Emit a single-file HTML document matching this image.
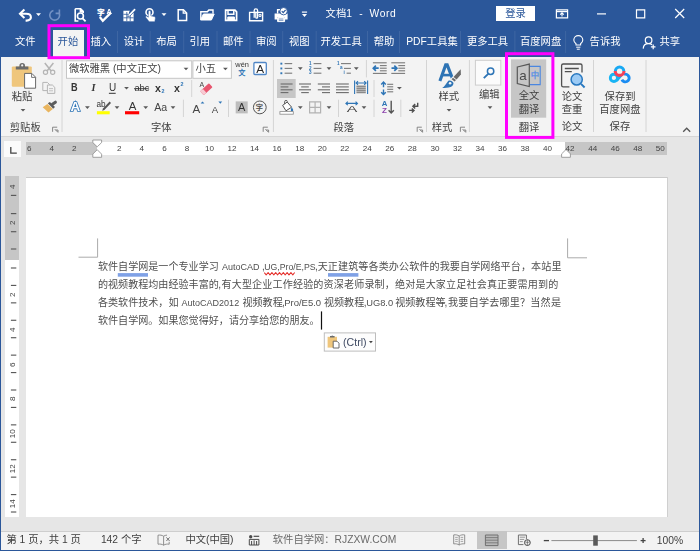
<!DOCTYPE html>
<html lang="zh-CN"><head><meta charset="utf-8"><title>文档1 - Word</title>
<style>
html,body{margin:0;padding:0}
body{width:700px;height:551px;position:relative;overflow:hidden;background:#e6e6e6;font-family:"Liberation Sans",sans-serif}
.b{position:absolute;box-sizing:border-box}
#ov{position:absolute;left:0;top:0;width:700px;height:551px}
#tx{position:absolute;left:0;top:0;width:700px;height:551px;will-change:transform}
.l{position:absolute;white-space:nowrap;font-family:"Liberation Sans",sans-serif}
.t{position:absolute;white-space:nowrap;font-family:"Liberation Sans","Noto Sans CJK SC",sans-serif}
</style></head><body>
<div class="b" style="left:0px;top:0px;width:700px;height:56.5px;background:#2b579a;"></div>
<div class="b" style="left:0px;top:56.5px;width:700px;height:79.5px;background:#f3f3f3;"></div>
<div class="b" style="left:0px;top:136px;width:700px;height:1px;background:#d6d6d6;"></div>
<div class="b" style="left:53px;top:30px;width:31px;height:26.5px;background:#f3f3f3;"></div>
<div class="b" style="left:496px;top:6px;width:39px;height:15.3px;background:#ffffff;"></div>
<div class="b" style="left:3.8px;top:140.6px;width:17.6px;height:16.3px;background:#fbfbfb;"></div>
<div class="b" style="left:25.7px;top:142px;width:71.1px;height:12.8px;background:#c6c6c6;"></div>
<div class="b" style="left:96.8px;top:142px;width:468.3px;height:12.8px;background:#ffffff;"></div>
<div class="b" style="left:565.1px;top:142px;width:102px;height:12.8px;background:#c6c6c6;"></div>
<div class="b" style="left:5.1px;top:176.2px;width:14.3px;height:83.5px;background:#c6c6c6;"></div>
<div class="b" style="left:5.1px;top:259.7px;width:14.3px;height:257.3px;background:#ffffff;"></div>
<div class="b" style="left:25.7px;top:177.5px;width:641.4px;height:339.5px;background:#ffffff;"></div>
<div class="b" style="left:25.7px;top:176.7px;width:642.2px;height:0.9px;background:#cacaca;"></div>
<div class="b" style="left:667px;top:176.7px;width:0.9px;height:340.3px;background:#cfcfcf;"></div>
<div class="b" style="left:0px;top:531.3px;width:700px;height:18.3px;background:#f3f3f3;"></div>
<div class="b" style="left:0px;top:530.7px;width:700px;height:0.9px;background:#cecece;"></div>
<div class="b" style="left:477.1px;top:531.1px;width:29.8px;height:18.4px;background:#c6c6c6;"></div>
<div class="b" style="left:0px;top:0px;width:1.2px;height:551px;background:#2b579a;"></div>
<div class="b" style="left:698.6px;top:0px;width:1.4px;height:551px;background:#2b579a;"></div>
<div class="b" style="left:0px;top:549.5px;width:700px;height:1.5px;background:#2b579a;"></div>
<svg id="ov" width="700" height="551" viewBox="0 0 700 551">
<path d="M88.75 31L88.75 53" stroke="#ffffff" stroke-width="1" fill="none" opacity="0.09"/>
<path d="M117.5 31L117.5 53" stroke="#ffffff" stroke-width="1" fill="none" opacity="0.09"/>
<path d="M150.2 31L150.2 53" stroke="#ffffff" stroke-width="1" fill="none" opacity="0.09"/>
<path d="M183.7 31L183.7 53" stroke="#ffffff" stroke-width="1" fill="none" opacity="0.09"/>
<path d="M217 31L217 53" stroke="#ffffff" stroke-width="1" fill="none" opacity="0.09"/>
<path d="M250 31L250 53" stroke="#ffffff" stroke-width="1" fill="none" opacity="0.09"/>
<path d="M282.7 31L282.7 53" stroke="#ffffff" stroke-width="1" fill="none" opacity="0.09"/>
<path d="M316.2 31L316.2 53" stroke="#ffffff" stroke-width="1" fill="none" opacity="0.09"/>
<path d="M367.5 31L367.5 53" stroke="#ffffff" stroke-width="1" fill="none" opacity="0.09"/>
<path d="M399.5 31L399.5 53" stroke="#ffffff" stroke-width="1" fill="none" opacity="0.09"/>
<path d="M460.5 31L460.5 53" stroke="#ffffff" stroke-width="1" fill="none" opacity="0.09"/>
<path d="M514.9 31L514.9 53" stroke="#ffffff" stroke-width="1" fill="none" opacity="0.09"/>
<path d="M565.6 31L565.6 53" stroke="#ffffff" stroke-width="1" fill="none" opacity="0.09"/>
<path d="M62 60L62 132" stroke="#d4d4d4" stroke-width="1" fill="none" />
<path d="M273.4 60L273.4 132" stroke="#d4d4d4" stroke-width="1" fill="none" />
<path d="M426.5 60L426.5 132" stroke="#d4d4d4" stroke-width="1" fill="none" />
<path d="M469.4 60L469.4 132" stroke="#d4d4d4" stroke-width="1" fill="none" />
<path d="M593.5 60L593.5 132" stroke="#d4d4d4" stroke-width="1" fill="none" />
<path d="M646 60L646 132" stroke="#d4d4d4" stroke-width="1" fill="none" />
<path d="M191.7 80L191.7 97" stroke="#d4d4d4" stroke-width="1" fill="none" />
<path d="M183.4 99.7L183.4 117" stroke="#d4d4d4" stroke-width="1" fill="none" />
<path d="M228.5 99.7L228.5 117" stroke="#d4d4d4" stroke-width="1" fill="none" />
<path d="M366.4 60L366.4 77.4" stroke="#d4d4d4" stroke-width="1" fill="none" />
<path d="M374 80L374 97" stroke="#d4d4d4" stroke-width="1" fill="none" />
<path d="M338.5 99.7L338.5 117" stroke="#d4d4d4" stroke-width="1" fill="none" />
<path d="M374 99.7L374 117" stroke="#d4d4d4" stroke-width="1" fill="none" />
<path d="M400.8 99.7L400.8 117" stroke="#d4d4d4" stroke-width="1" fill="none" />
<rect x="511" y="59.4" width="35.2" height="58.3" fill="#c6c6c6" />
<rect x="66.5" y="60.8" width="125.2" height="17.5" fill="#fff" stroke="#c6c6c6" stroke-width="1"/>
<rect x="192.9" y="60.8" width="38.5" height="17.5" fill="#fff" stroke="#c6c6c6" stroke-width="1"/>
<path d="M10.8 147v6.2h6" stroke="#444" stroke-width="1.3" fill="none"/>
<path d="M92.8 140h8.8v2.6l-4.4 4.2l-4.4-4.2z" fill="#fff" stroke="#8a8a8a" stroke-width="0.8"/>
<path d="M92.8 157.3v-3.2l4.4-4.4l4.4 4.4v3.2z" fill="#fff" stroke="#8a8a8a" stroke-width="0.8"/>
<path d="M561.6 157.3v-3.4l4.4-4.4l4.4 4.4v3.4z" fill="#fff" stroke="#8a8a8a" stroke-width="0.8"/>
<path d="M10.9 195.4L16.3 195.4" stroke="#5a5a5a" stroke-width="1.15" fill="none" />
<path d="M10.9 213.6L16.3 213.6" stroke="#5a5a5a" stroke-width="1.15" fill="none" />
<path d="M10.9 231.7L16.3 231.7" stroke="#5a5a5a" stroke-width="1.15" fill="none" />
<path d="M10.9 249L16.3 249" stroke="#5a5a5a" stroke-width="1.15" fill="none" />
<path d="M10.9 267.99L16.3 267.99" stroke="#5a5a5a" stroke-width="1.15" fill="none" />
<path d="M10.9 285.42L16.3 285.42" stroke="#5a5a5a" stroke-width="1.15" fill="none" />
<path d="M10.9 302.85L16.3 302.85" stroke="#5a5a5a" stroke-width="1.15" fill="none" />
<path d="M10.9 320.28L16.3 320.28" stroke="#5a5a5a" stroke-width="1.15" fill="none" />
<path d="M10.9 337.71L16.3 337.71" stroke="#5a5a5a" stroke-width="1.15" fill="none" />
<path d="M10.9 355.14L16.3 355.14" stroke="#5a5a5a" stroke-width="1.15" fill="none" />
<path d="M10.9 372.57L16.3 372.57" stroke="#5a5a5a" stroke-width="1.15" fill="none" />
<path d="M10.9 390L16.3 390" stroke="#5a5a5a" stroke-width="1.15" fill="none" />
<path d="M10.9 407.43L16.3 407.43" stroke="#5a5a5a" stroke-width="1.15" fill="none" />
<path d="M10.9 424.86L16.3 424.86" stroke="#5a5a5a" stroke-width="1.15" fill="none" />
<path d="M10.9 442.29L16.3 442.29" stroke="#5a5a5a" stroke-width="1.15" fill="none" />
<path d="M10.9 459.72L16.3 459.72" stroke="#5a5a5a" stroke-width="1.15" fill="none" />
<path d="M10.9 477.15L16.3 477.15" stroke="#5a5a5a" stroke-width="1.15" fill="none" />
<path d="M10.9 494.58L16.3 494.58" stroke="#5a5a5a" stroke-width="1.15" fill="none" />
<path d="M10.9 512.01L16.3 512.01" stroke="#5a5a5a" stroke-width="1.15" fill="none" />
<path d="M78.5 257.2H97.6V238.4" stroke="#ababab" fill="none" stroke-width="1"/>
<path d="M587 257.8H567.6V238.4" stroke="#ababab" fill="none" stroke-width="1"/>
<rect x="117.8" y="273.1" width="30.2" height="3.6" fill="#7fa1e6" />
<rect x="328" y="273.1" width="30.4" height="3.6" fill="#7fa1e6" />
<path d="M264.3 272.6L266.2 274.9L268.1 272.5L270 274.9L271.9 272.5L273.8 274.9L275.7 272.5L277.6 274.9L279.5 272.5L281.4 274.9L283.3 272.5L285.2 274.9L287.1 272.5L289 274.9L290.9 272.5L292.8 274.9L294.7 272.5" stroke="#e5332f" stroke-width="1.05" fill="none" stroke-linejoin="round"/>
<rect x="320.9" y="311.4" width="1.2" height="18.2" fill="#111" />
<rect x="324.3" y="332.9" width="51.2" height="18.2" fill="#fdfdfd" stroke="#bdbdbd" stroke-width="1"/>
<path d="M369 341h3.8l-1.9 2.2z" fill="#444"/>
<path d="M551.4 540.6L636.9 540.6" stroke="#8a8a8a" stroke-width="1" fill="none" />
<rect x="593.2" y="535.4" width="4.6" height="10.3" fill="#5a5a5a" />
<path d="M543.8 540.6L549 540.6" stroke="#444" stroke-width="1.3" fill="none" />
<path d="M640.6 540.6L645.6 540.6" stroke="#444" stroke-width="1.3" fill="none" />
<path d="M643.1 538.1L643.1 543.1" stroke="#444" stroke-width="1.3" fill="none" />
<rect x="49" y="25.7" width="39.5" height="32" fill="none" stroke="#ff00ff" stroke-width="3"/>
<rect x="506.5" y="53.7" width="46.4" height="83.7" fill="none" stroke="#ff00ff" stroke-width="3"/>
<path d="M24.4 9.6L20 13.8L24.4 18" fill="none" stroke="#ffffff" stroke-width="2.1" stroke-linejoin="miter"/>
<path d="M20.6 13.8H26.2C32.4 13.8 32.4 20.6 26.6 20.6H25.6" fill="none" stroke="#ffffff" stroke-width="2.1"/>
<path d="M36 13.2h5l-2.5 2.8z" fill="#ffffff"/>
<path d="M53.43 10.47A4.9 4.9 0 1 0 59.14 13.13" fill="none" stroke="#7391c4" stroke-width="1.6"/>
<path d="M55.6 13.4h3.8v-3.9" fill="none" stroke="#7391c4" stroke-width="1.6"/>
<path d="M75.2 8.8h5.4l2.6 2.6v1.6M75.2 8.8v12.2h3.2M80.4 9v2.8h2.8" fill="none" stroke="#ffffff" stroke-width="1.6"/>
<circle cx="80.4" cy="16" r="3" fill="none" stroke="#fff" stroke-width="1.6"/>
<path d="M82.6 18.3l3 3" fill="none" stroke="#ffffff" stroke-width="1.9"/>
<text x="97.3" y="14.77" font-size="7.2" fill="#ffffff" stroke="#ffffff" stroke-width="0.6" font-family="&quot;Liberation Sans&quot;,&quot;Noto Sans CJK SC&quot;,sans-serif">字</text>
<path d="M99.8 17l3 3.8l8.2-8.2" fill="none" stroke="#ffffff" stroke-width="2.2"/>
<path d="M123.4 10.8h6.6l-1 1.2v2.4h2.2l2.4-2.2v9h-10.2z" fill="#ffffff"/>
<path d="M126.8 12v9.2M130.2 14.6v6.6M123.4 14.3h5M123.4 17.8h10.2" fill="none" stroke="#2b579a" stroke-width="0.8"/>
<path d="M134.4 8.2l1.6 1.6l-6 6.2l-2.4 .9l.8-2.5z" fill="#ffffff" stroke="#2b579a" stroke-width="0.7"/>
<circle cx="149.5" cy="12.2" r="3.5" fill="none" stroke="#fff" stroke-width="1.6"/>
<path d="M148.3 11.8a1.25 1.25 0 0 1 2.5 0v4l3.4 .8c1 .2 1.3 .9 1.2 1.7l-.6 3.4h-5.6l-3.4-4.3c-.6-.8 .4-1.8 1.2-1.2l1.3 1z" fill="#ffffff" stroke="#2b579a" stroke-width="0.5"/>
<path d="M161.5 13.2h5l-2.5 2.8z" fill="#ffffff"/>
<path d="M178.2 9.8h5.2l3.2 3.2v7.6h-8.4z" fill="none" stroke="#ffffff" stroke-width="1.5"/>
<path d="M183.2 10v3.2h3.2" fill="none" stroke="#ffffff" stroke-width="1.2"/>
<path d="M200.8 19.8v-8h6.6l1.4-1.8h4.2v3.6" fill="none" stroke="#ffffff" stroke-width="1.4"/>
<path d="M200.6 20l2.8-6h10.8l-2.8 6z" fill="#ffffff" stroke="#ffffff" stroke-width="1"/>
<path d="M225.6 10.2h9.4l1.6 1.6v8.6h-11z" fill="none" stroke="#ffffff" stroke-width="1.7"/>
<path d="M228 10.4v3.8h5.8v-3.8" fill="none" stroke="#ffffff" stroke-width="1.5"/>
<path d="M227.8 20.4v-3.4h6.6v3.4z" fill="#ffffff" stroke="#ffffff" stroke-width="1"/>
<path d="M249.6 12.4h13v8.4h-13z" fill="none" stroke="#ffffff" stroke-width="1.4"/>
<path d="M259 14.4h2v2h-2z" fill="none" stroke="#ffffff" stroke-width="1"/>
<path d="M254.2 17.8v-7.2a1.7 1.7 0 0 1 3.4 0v6.6a.9 .9 0 0 1-1.8 0v-5.4" fill="none" stroke="#ffffff" stroke-width="1.3"/>
<path d="M277.6 13.6v-3.8h5.4" fill="none" stroke="#ffffff" stroke-width="1.4"/>
<path d="M274.6 13.6h13v6h-2.6v-2.4h-7.8v2.4h-2.6z" fill="#ffffff"/>
<path d="M277.6 17.6h7v4h-7z" fill="#ffffff" stroke="#ffffff" stroke-width="1"/>
<path d="M278.8 19h4.6M278.8 20.4h4.6" fill="none" stroke="#2b579a" stroke-width="0.6"/>
<circle cx="283.6" cy="11.2" r="3.7" fill="#fff" stroke="#2b579a" stroke-width="0.9"/>
<path d="M281.8 11.2l1.4 1.5l2.4-2.8" fill="none" stroke="#2b579a" stroke-width="1.2"/>
<path d="M301.9 12.1L307.1 12.1" stroke="#ffffff" stroke-width="1.2" fill="none" />
<path d="M302 14.1h5l-2.5 2.8z" fill="#ffffff"/>
<path d="M556.4 9.8h11.2v8h-11.2z" fill="none" stroke="#ffffff" stroke-width="1.2"/>
<path d="M556.4 11.6h11.2" fill="none" stroke="#ffffff" stroke-width="1.2"/>
<path d="M562 16.6v-3.6M560.2 14.6l1.8-1.8l1.8 1.8" fill="none" stroke="#ffffff" stroke-width="1.1"/>
<path d="M597 13.9L606 13.9" stroke="#ffffff" stroke-width="1.2" fill="none" />
<path d="M636.5 9.8h8.2v8h-8.2z" fill="none" stroke="#ffffff" stroke-width="1.2"/>
<path d="M675.2 9l9 9M684.2 9l-9 9" fill="none" stroke="#ffffff" stroke-width="1.2"/>
<path d="M576 45v-1.2c-1.6-1.3-2.2-2.4-2.2-3.7a4.5 4.5 0 0 1 9 0c0 1.3-.6 2.4-2.2 3.7V45z" fill="none" stroke="#ffffff" stroke-width="1.1"/>
<path d="M576.2 47.2h4.2M576.8 49.2h3" fill="none" stroke="#ffffff" stroke-width="1"/>
<circle cx="648.6" cy="40.2" r="3.3" fill="none" stroke="#fff" stroke-width="1.2"/>
<path d="M643.2 48.6c.2-3 2.4-4.9 5.4-4.9c1.4 0 2.6 .4 3.4 1.1" fill="none" stroke="#ffffff" stroke-width="1.2"/>
<path d="M653.2 44.6v4.6M650.9 46.9h4.6" fill="none" stroke="#ffffff" stroke-width="1.2"/>
<path d="M13 66.4h17.6a1.2 1.2 0 0 1 1.2 1.2v18a1.2 1.2 0 0 1-1.2 1.2h-17.6a1.2 1.2 0 0 1-1.2-1.2v-18a1.2 1.2 0 0 1 1.2-1.2z" fill="#efc67c"/>
<path d="M15.8 66.6h12.6v2.9h-12.6z" fill="#6b6b6b"/>
<path d="M19.4 67v-1.2a2.8 2.8 0 0 1 5.6 0v1.2z" fill="#6b6b6b"/>
<circle cx="22.2" cy="65.4" r="1.1" fill="#f3f3f3"/>
<path d="M24.6 73.4h7.2l3.8 3.8v11h-11z" fill="#fff" stroke="#686868" stroke-width="1"/>
<path d="M31.6 73.6v3.8h3.8" fill="none" stroke="#686868" stroke-width="0.9"/>
<path d="M20.6 108.9h4.8l-2.4 2.6z" fill="#5a5a5a"/>
<path d="M44.8 63l6.2 7.8M53.4 63l-6.2 7.8" fill="none" stroke="#b4b4b4" stroke-width="1.5"/>
<circle cx="45.5" cy="72.3" r="2.1" fill="none" stroke="#b4b4b4" stroke-width="1.2"/>
<circle cx="52.7" cy="72.3" r="2.1" fill="none" stroke="#b4b4b4" stroke-width="1.2"/>
<path d="M42.8 82.4h4.6l2.2 2.2v6h-6.8z" fill="#f3f3f3" stroke="#b4b4b4" stroke-width="1"/>
<path d="M47.4 85h5l2.4 2.4v6h-7.4z" fill="#f3f3f3" stroke="#b4b4b4" stroke-width="1"/>
<path d="M49 88.6h4M49 90.8h4" fill="none" stroke="#b4b4b4" stroke-width="0.8"/>
<path d="M47.4 104L42.7 107.2L48.5 112.6L52.8 109Z" fill="#e9b55f"/>
<path d="M47.8 103.3L49.9 101.9L55 106.9L53.2 108.7Z" fill="#5c5c5c"/>
<path d="M52.4 104.3L55.4 102.2" fill="none" stroke="#5c5c5c" stroke-width="3" stroke-linecap="round"/>
<path d="M52.6 131.8v-4.6h4.6" fill="none" stroke="#7a7a7a" stroke-width="0.9"/>
<path d="M54.8 129.2l3 3M58 132.4v-2.4h-2.4" fill="none" stroke="#7a7a7a" stroke-width="0.9"/>
<path d="M183.6 67.7h4.8l-2.4 2.6z" fill="#5a5a5a"/>
<path d="M223 67.7h4.8l-2.4 2.6z" fill="#5a5a5a"/>
<text x="238.56" y="74.82" font-size="6.8" fill="#2e75b6" stroke="#2e75b6" stroke-width="0.3" font-family="&quot;Liberation Sans&quot;,&quot;Noto Sans CJK SC&quot;,sans-serif">文</text>
<rect x="253.9" y="62.5" width="12.4" height="12" fill="#fff" stroke="#4f86c6" stroke-width="1.3" rx="1"/>
<path d="M108.9 93.3L115.7 93.3" stroke="#333" stroke-width="1" fill="none" />
<path d="M124.1 86.9h4.8l-2.4 2.6z" fill="#5a5a5a"/>
<path d="M134 88.7L148.8 88.7" stroke="#333" stroke-width="0.9" fill="none" />
<g transform="rotate(-42 206.4 89.2)"><rect x="200.4" y="86.5" width="12" height="5.4" rx="1" fill="#e8566f"/><rect x="200.4" y="86.5" width="3.6" height="5.4" rx="1" fill="#f7cbd3"/></g>
<path d="M85 106.3h4.8l-2.4 2.6z" fill="#5a5a5a"/>
<path d="M109.6 101.6l1.4 1.4l-6.6 7l-2.2 .8l.8-2.2z" fill="#555"/>
<rect x="96.9" y="111.2" width="12.8" height="3.1" fill="#ffff00" />
<path d="M114.6 106.3h4.8l-2.4 2.6z" fill="#5a5a5a"/>
<rect x="125" y="111.2" width="14.2" height="3.1" fill="#ff0000" />
<path d="M143.3 106.3h4.8l-2.4 2.6z" fill="#5a5a5a"/>
<path d="M170.6 106.3h4.8l-2.4 2.6z" fill="#5a5a5a"/>
<path d="M200.6 103.6l1.9-2.2l1.9 2.2z" fill="#2e75b6"/>
<path d="M218.4 101.6h3.8l-1.9 2.2z" fill="#2e75b6"/>
<rect x="235.7" y="101.4" width="12" height="12" fill="#bdbdbd" />
<circle cx="259.8" cy="107.4" r="6.4" fill="none" stroke="#555" stroke-width="1"/>
<text x="255.8" y="110.27" font-size="7.2" fill="#444" stroke="#444" stroke-width="0.25" font-family="&quot;Liberation Sans&quot;,&quot;Noto Sans CJK SC&quot;,sans-serif">字</text>
<path d="M263.2 131.8v-4.6h4.6" fill="none" stroke="#7a7a7a" stroke-width="0.9"/>
<path d="M265.4 129.2l3 3M268.6 132.4v-2.4h-2.4" fill="none" stroke="#7a7a7a" stroke-width="0.9"/>
<rect x="280.4" y="62.7" width="1.9" height="1.9" fill="#2e75b6" />
<path d="M284.6 63.6L292.2 63.6" stroke="#7a7a7a" stroke-width="1.1" fill="none" />
<rect x="280.4" y="67.5" width="1.9" height="1.9" fill="#2e75b6" />
<path d="M284.6 68.4L292.2 68.4" stroke="#7a7a7a" stroke-width="1.1" fill="none" />
<rect x="280.4" y="72.3" width="1.9" height="1.9" fill="#2e75b6" />
<path d="M284.6 73.2L292.2 73.2" stroke="#7a7a7a" stroke-width="1.1" fill="none" />
<path d="M297.9 67.3h4.8l-2.4 2.6z" fill="#5a5a5a"/>
<path d="M313.6 63.6L321.4 63.6" stroke="#7a7a7a" stroke-width="1.1" fill="none" />
<path d="M313.6 68.4L321.4 68.4" stroke="#7a7a7a" stroke-width="1.1" fill="none" />
<path d="M313.6 73.2L321.4 73.2" stroke="#7a7a7a" stroke-width="1.1" fill="none" />
<path d="M326.6 67.3h4.8l-2.4 2.6z" fill="#5a5a5a"/>
<path d="M341 63.6L350.9 63.6" stroke="#7a7a7a" stroke-width="1.1" fill="none" />
<path d="M344 68.4L350.9 68.4" stroke="#7a7a7a" stroke-width="1.1" fill="none" />
<path d="M346.6 73.2L350.9 73.2" stroke="#7a7a7a" stroke-width="1.1" fill="none" />
<path d="M353.9 67.3h4.8l-2.4 2.6z" fill="#5a5a5a"/>
<path d="M372.9 62.8L386.7 62.8" stroke="#7a7a7a" stroke-width="1.1" fill="none" />
<path d="M372.9 73.4L386.7 73.4" stroke="#7a7a7a" stroke-width="1.1" fill="none" />
<path d="M379.9 65.6L386.7 65.6" stroke="#7a7a7a" stroke-width="1.1" fill="none" />
<path d="M379.9 68.2L386.7 68.2" stroke="#7a7a7a" stroke-width="1.1" fill="none" />
<path d="M379.9 70.8L386.7 70.8" stroke="#7a7a7a" stroke-width="1.1" fill="none" />
<path d="M378.7 68.2h-5.2M375.9 65.6l-2.6 2.6l2.6 2.6" fill="none" stroke="#2e75b6" stroke-width="1.7"/>
<path d="M391.3 62.8L405.1 62.8" stroke="#7a7a7a" stroke-width="1.1" fill="none" />
<path d="M391.3 73.4L405.1 73.4" stroke="#7a7a7a" stroke-width="1.1" fill="none" />
<path d="M398.3 65.6L405.1 65.6" stroke="#7a7a7a" stroke-width="1.1" fill="none" />
<path d="M398.3 68.2L405.1 68.2" stroke="#7a7a7a" stroke-width="1.1" fill="none" />
<path d="M398.3 70.8L405.1 70.8" stroke="#7a7a7a" stroke-width="1.1" fill="none" />
<path d="M391.5 68.2h5.2M394.3 65.6l2.6 2.6l-2.6 2.6" fill="none" stroke="#2e75b6" stroke-width="1.7"/>
<rect x="277" y="79" width="18.7" height="19" fill="#c6c6c6" />
<path d="M280.6 84L292.6 84" stroke="#6a6a6a" stroke-width="1.1" fill="none" />
<path d="M299 84L311 84" stroke="#6a6a6a" stroke-width="1.1" fill="none" />
<path d="M317.8 84L330 84" stroke="#6a6a6a" stroke-width="1.1" fill="none" />
<path d="M336 84L348.8 84" stroke="#6a6a6a" stroke-width="1.1" fill="none" />
<path d="M280.6 86.9L288.4 86.9" stroke="#6a6a6a" stroke-width="1.1" fill="none" />
<path d="M301.2 86.9L308.8 86.9" stroke="#6a6a6a" stroke-width="1.1" fill="none" />
<path d="M322 86.9L330 86.9" stroke="#6a6a6a" stroke-width="1.1" fill="none" />
<path d="M336 86.9L348.8 86.9" stroke="#6a6a6a" stroke-width="1.1" fill="none" />
<path d="M280.6 89.8L292.6 89.8" stroke="#6a6a6a" stroke-width="1.1" fill="none" />
<path d="M299 89.8L311 89.8" stroke="#6a6a6a" stroke-width="1.1" fill="none" />
<path d="M317.8 89.8L330 89.8" stroke="#6a6a6a" stroke-width="1.1" fill="none" />
<path d="M336 89.8L348.8 89.8" stroke="#6a6a6a" stroke-width="1.1" fill="none" />
<path d="M280.6 92.6L288.4 92.6" stroke="#6a6a6a" stroke-width="1.1" fill="none" />
<path d="M301.2 92.6L308.8 92.6" stroke="#6a6a6a" stroke-width="1.1" fill="none" />
<path d="M322 92.6L330 92.6" stroke="#6a6a6a" stroke-width="1.1" fill="none" />
<path d="M336 92.6L348.8 92.6" stroke="#6a6a6a" stroke-width="1.1" fill="none" />
<path d="M354.6 80.6L354.6 94" stroke="#2e75b6" stroke-width="1.1" fill="none" />
<path d="M367.6 80.6L367.6 94" stroke="#2e75b6" stroke-width="1.1" fill="none" />
<path d="M356 83h10.2M358 81.2l-1.9 1.8l1.9 1.8M364.2 81.2l1.9 1.8l-1.9 1.8" fill="none" stroke="#2e75b6" stroke-width="1.1"/>
<path d="M356.4 86.4L365.8 86.4" stroke="#8a8a8a" stroke-width="1.7" fill="none" />
<path d="M356.4 88.4L365.8 88.4" stroke="#8a8a8a" stroke-width="1.7" fill="none" />
<path d="M356.4 90.4L365.8 90.4" stroke="#8a8a8a" stroke-width="1.7" fill="none" />
<path d="M356.4 92.4L365.8 92.4" stroke="#8a8a8a" stroke-width="1.7" fill="none" />
<path d="M383.5 82.2v5M381.2 84.4l2.3-2.4l2.3 2.4" fill="none" stroke="#2e75b6" stroke-width="1.4"/>
<path d="M383.5 89.4v5M381.2 92.2l2.3 2.4l2.3-2.4" fill="none" stroke="#2e75b6" stroke-width="1.4"/>
<path d="M387.2 84.3L393.2 84.3" stroke="#7a7a7a" stroke-width="1.1" fill="none" />
<path d="M387.2 86.8L393.2 86.8" stroke="#7a7a7a" stroke-width="1.1" fill="none" />
<path d="M387.2 89.3L393.2 89.3" stroke="#7a7a7a" stroke-width="1.1" fill="none" />
<path d="M387.2 91.8L393.2 91.8" stroke="#7a7a7a" stroke-width="1.1" fill="none" />
<path d="M397 86.9h4.8l-2.4 2.6z" fill="#5a5a5a"/>
<path d="M282.6 105.4l4.6-3.4l4.4 5.2l-5.6 3.6z" fill="#fff" stroke="#555" stroke-width="1"/>
<path d="M284.6 104v-2.2a1.4 1.4 0 0 1 2.8 0" fill="none" stroke="#555" stroke-width="0.9"/>
<path d="M291.6 107.2c1 1.2 1.6 2.2 1.6 3a1.2 1.2 0 0 1-2.4 0c0-.8 .4-1.8 .8-3z" fill="#2e75b6"/>
<rect x="279.9" y="111.6" width="13.4" height="2.6" fill="#fff" stroke="#8a8a8a" stroke-width="0.8"/>
<path d="M297.9 106.3h4.8l-2.4 2.6z" fill="#5a5a5a"/>
<path d="M309.6 101.8h11v11h-11zM315.1 101.8v11M309.6 107.3h11" fill="none" stroke="#b2b2b2" stroke-width="1.2"/>
<path d="M326.6 106.3h4.8l-2.4 2.6z" fill="#5a5a5a"/>
<path d="M346 103.4h11.4M347.8 101.6l-1.9 1.8l1.9 1.8M355.6 101.6l1.9 1.8l-1.9 1.8" fill="none" stroke="#2e75b6" stroke-width="1.1"/>
<path d="M361.6 106.3h4.8l-2.4 2.6z" fill="#5a5a5a"/>
<path d="M391.2 100.8v12M388.6 110.2l2.6 2.8l2.6-2.8" fill="none" stroke="#555" stroke-width="1.4"/>
<path d="M417.7 102.8v3.4h-4.6M415.2 104l-2.3 2.2l2.3 2.2" fill="none" stroke="#4f4f4f" stroke-width="1.4"/>
<path d="M409.2 110.4h4.6M411.8 108.4l2.2 2l-2.2 2" fill="none" stroke="#4f4f4f" stroke-width="1.4"/>
<path d="M417.2 131.8v-4.6h4.6" fill="none" stroke="#7a7a7a" stroke-width="0.9"/>
<path d="M419.4 129.2l3 3M422.6 132.4v-2.4h-2.4" fill="none" stroke="#7a7a7a" stroke-width="0.9"/>
<path d="M439.9 81L445.7 64.9h1.5L452.9 79.6" fill="none" stroke="#2e74b5" stroke-width="3.1" stroke-linejoin="miter"/>
<path d="M442.6 75.1h8.6" fill="none" stroke="#2e74b5" stroke-width="2.6"/>
<path d="M460.7 69.2L460.9 74.5L455.6 80.5L453.8 81.3L451.7 79L452.5 78.1Z" fill="#f3f3f3" stroke="#f3f3f3" stroke-width="2"/>
<path d="M448.5 80.5L453.1 82.1L453.5 83.9L451 86.7L442.3 87.9L445.4 84.5Z" fill="#f3f3f3" stroke="#f3f3f3" stroke-width="2.4"/>
<path d="M460.7 69.2L460.9 74.5L456.6 79.4L453.5 77.1Z" fill="#6a6a6a"/>
<path d="M452.9 77.8L456 80.1L454.6 81.6L451.6 79.2Z" fill="#6a6a6a"/>
<path d="M448.3 80.7C450.5 79.9 452.6 81 453.4 82.8C453.8 84.6 452.6 86.2 450.6 87C448 87.9 445 88 442.2 88C444.6 86.4 446 83.6 448.3 80.7Z" fill="#2e74b5"/>
<circle cx="450.1" cy="83.2" r="1.3" fill="#f3f3f3"/>
<path d="M446.6 108.9h4.8l-2.4 2.6z" fill="#5a5a5a"/>
<path d="M460.4 131.8v-4.6h4.6" fill="none" stroke="#7a7a7a" stroke-width="0.9"/>
<path d="M462.6 129.2l3 3M465.8 132.4v-2.4h-2.4" fill="none" stroke="#7a7a7a" stroke-width="0.9"/>
<rect x="475.4" y="60.3" width="25.4" height="24.8" fill="#fbfbfb" stroke="#cdcdcd" stroke-width="1"/>
<circle cx="490.6" cy="71.2" r="3.2" fill="none" stroke="#2e75b6" stroke-width="1.5"/>
<path d="M488.2 73.8l-4.4 4.4" fill="none" stroke="#2e75b6" stroke-width="1.9"/>
<path d="M487.6 106.3h4.8l-2.4 2.6z" fill="#5a5a5a"/>
<path d="M529.6 66.4h10.6v18.2h-10.6" fill="none" stroke="#4a86e0" stroke-width="1.1"/>
<text x="530.69" y="78.23" font-size="8.4" fill="#4f8be6" stroke="#4f8be6" stroke-width="0.25" font-family="&quot;Liberation Sans&quot;,&quot;Noto Sans CJK SC&quot;,sans-serif">中</text>
<path d="M517.3 67L529.3 64.1V86.6L517.3 83.6Z" fill="#c6c6c6" stroke="#585858" stroke-width="1.2"/>
<path d="M569.4 86.8h-6.2a1.6 1.6 0 0 1-1.6-1.6v-19.6a1.6 1.6 0 0 1 1.6-1.6h17.2a1.6 1.6 0 0 1 1.6 1.6v7" fill="none" stroke="#505050" stroke-width="1.3"/>
<path d="M564.8 68.5h14M564.8 71.7h7" fill="none" stroke="#505050" stroke-width="1.3"/>
<circle cx="576.7" cy="79.4" r="5.6" fill="#9ccbf5" stroke="#2878c0" stroke-width="1.5"/>
<path d="M581 83.8l3.6 3.7" fill="none" stroke="#2878c0" stroke-width="1.9"/>
<path d="M616.6 80.6L621.6 74.6" fill="none" stroke="#18b0f4" stroke-width="3"/>
<circle cx="613.9" cy="77.9" r="3.6" fill="none" stroke="#18b4f4" stroke-width="2.9"/>
<path d="M621.9 79.6A3.8 3.8 0 1 0 624 74.5" fill="none" stroke="#1a8cf2" stroke-width="2.9"/>
<path d="M615.4 71.2A4.2 4.2 0 0 1 623.8 71.2" fill="none" stroke="#19a9f3" stroke-width="3"/>
<path d="M615.2 71A4.4 4.4 0 0 0 624 71" fill="none" stroke="#f4415a" stroke-width="3.1"/>
<path d="M683.2 131.8l3.5-3.6l3.5 3.6" fill="none" stroke="#555" stroke-width="1.3"/>
<path d="M163.6 536.2c-1.6-1.1-3.6-1.3-5.6-1v9c2-.3 4-.1 5.6 1c1.6-1.1 3.6-1.3 5.6-1v-2.4M163.6 536.2v9M163.6 536.2c1-.7 2.2-1 3.4-1.1" fill="none" stroke="#858585" stroke-width="0.9"/>
<path d="M166.4 537.4l3.2 3.6M169.6 537.4l-3.2 3.6" fill="none" stroke="#666" stroke-width="0.9"/>
<circle cx="250.7" cy="536.8" r="1.7" fill="#4a4a4a"/>
<path d="M253.6 536.3L259.2 536.3" stroke="#4a4a4a" stroke-width="1.2" fill="none" />
<path d="M249.3 539.4h9.6v5.6h-9.6z" fill="none" stroke="#4a4a4a" stroke-width="1"/>
<path d="M251.6 541v4M254.1 540.4v4.6M256.6 541v4" fill="none" stroke="#4a4a4a" stroke-width="1"/>
<path d="M459.2 536c-1.6-1.1-3.6-1.4-5.5-1.1v9c1.9-.3 3.9 0 5.5 1.1c1.6-1.1 3.6-1.4 5.5-1.1v-9c-1.9-.3-3.9 0-5.5 1.1zM459.2 536v9" fill="none" stroke="#858585" stroke-width="0.9"/>
<path d="M455.2 537.4h2.6M455.2 539.4h2.6M455.2 541.4h2.6M460.6 537.4h2.6M460.6 539.4h2.6M460.6 541.4h2.6" fill="none" stroke="#858585" stroke-width="0.7"/>
<path d="M485.4 535h12.6v10.6h-12.6z" fill="#b8b8b8" stroke="#707070" stroke-width="1"/>
<path d="M485.4 537.6h12.6M485.4 540.2h12.6M485.4 542.8h12.6" fill="none" stroke="#707070" stroke-width="0.8"/>
<path d="M526.4 539v-4h-8v9.6h5" fill="none" stroke="#707070" stroke-width="1"/>
<path d="M519.8 537.2h5.2M519.8 539.4h4.4M519.8 541.6h3" fill="none" stroke="#707070" stroke-width="0.7"/>
<circle cx="527.4" cy="542.6" r="2.9" fill="#f3f3f3" stroke="#4a4a4a" stroke-width="1"/>
<path d="M524.8 541.8c1.6 .8 3.6 .8 5.2 0M527.4 539.8v5.6" fill="none" stroke="#4a4a4a" stroke-width="0.6"/>
<path d="M327.6 336.8h9.4v10.8h-9.4z" fill="#efc67c"/>
<path d="M330 337.6v-1.6h1.4a1 1 0 0 1 1.8 0h1.4v1.6z" fill="#6b6b6b"/>
<path d="M333.2 341.2h3.8l2 2v4.8h-5.8z" fill="#fff" stroke="#5a5a5a" stroke-width="0.9"/>
</svg>
<div id="tx">
<span class="t" style="left:325.6px;top:8.22px;font-size:10.3px;line-height:12.36px;color:#ffffff">文档1</span>
<span class="t" style="left:359.3px;top:8.22px;font-size:10.3px;line-height:12.36px;color:#ffffff">-</span>
<span class="t" style="left:369.6px;top:8.22px;font-size:10.3px;line-height:12.36px;color:#ffffff;letter-spacing:0.6px">Word</span>
<span class="t" style="left:505.2px;top:7.62px;font-size:10.3px;line-height:12.36px;color:#2b579a">登录</span>
<span class="t" style="left:15px;top:36.02px;font-size:10.3px;line-height:12.36px;color:#ffffff">文件</span>
<span class="t" style="left:90.5px;top:36.02px;font-size:10.3px;line-height:12.36px;color:#ffffff">插入</span>
<span class="t" style="left:123.75px;top:36.02px;font-size:10.3px;line-height:12.36px;color:#ffffff">设计</span>
<span class="t" style="left:156.25px;top:36.02px;font-size:10.3px;line-height:12.36px;color:#ffffff">布局</span>
<span class="t" style="left:189.5px;top:36.02px;font-size:10.3px;line-height:12.36px;color:#ffffff">引用</span>
<span class="t" style="left:223px;top:36.02px;font-size:10.3px;line-height:12.36px;color:#ffffff">邮件</span>
<span class="t" style="left:256px;top:36.02px;font-size:10.3px;line-height:12.36px;color:#ffffff">审阅</span>
<span class="t" style="left:289px;top:36.02px;font-size:10.3px;line-height:12.36px;color:#ffffff">视图</span>
<span class="t" style="left:320.5px;top:36.02px;font-size:10.3px;line-height:12.36px;color:#ffffff">开发工具</span>
<span class="t" style="left:373.75px;top:36.02px;font-size:10.3px;line-height:12.36px;color:#ffffff">帮助</span>
<span class="t" style="left:406.25px;top:36.02px;font-size:10.3px;line-height:12.36px;color:#ffffff">PDF工具集</span>
<span class="t" style="left:466.9px;top:36.02px;font-size:10.3px;line-height:12.36px;color:#ffffff">更多工具</span>
<span class="t" style="left:520px;top:36.02px;font-size:10.3px;line-height:12.36px;color:#ffffff">百度网盘</span>
<span class="t" style="left:589.6px;top:36.02px;font-size:10.3px;line-height:12.36px;color:#ffffff">告诉我</span>
<span class="t" style="left:659.5px;top:36.02px;font-size:10.3px;line-height:12.36px;color:#ffffff">共享</span>
<span class="t" style="left:57.6px;top:35.62px;font-size:10.3px;line-height:12.36px;color:#2b579a">开始</span>
<span class="t" style="left:11.7px;top:90.82px;font-size:10.3px;line-height:12.36px;color:#3e3e3e">粘贴</span>
<span class="t" style="left:9.8px;top:121.52px;font-size:10.3px;line-height:12.36px;color:#3e3e3e">剪贴板</span>
<span class="t" style="left:150.9px;top:121.52px;font-size:10.3px;line-height:12.36px;color:#3e3e3e">字体</span>
<span class="t" style="left:333.4px;top:121.52px;font-size:10.3px;line-height:12.36px;color:#3e3e3e">段落</span>
<span class="t" style="left:438.5px;top:90.82px;font-size:10.3px;line-height:12.36px;color:#3e3e3e">样式</span>
<span class="t" style="left:431.7px;top:121.52px;font-size:10.3px;line-height:12.36px;color:#3e3e3e">样式</span>
<span class="t" style="left:478.9px;top:89.32px;font-size:10.3px;line-height:12.36px;color:#3e3e3e">编辑</span>
<span class="t" style="left:561.8px;top:91.02px;font-size:10.3px;line-height:12.36px;color:#3e3e3e">论文</span>
<span class="t" style="left:561.8px;top:104.02px;font-size:10.3px;line-height:12.36px;color:#3e3e3e">查重</span>
<span class="t" style="left:561.8px;top:121.42px;font-size:10.3px;line-height:12.36px;color:#3e3e3e">论文</span>
<span class="t" style="left:604.6px;top:91.02px;font-size:10.3px;line-height:12.36px;color:#3e3e3e">保存到</span>
<span class="t" style="left:599.3px;top:104.02px;font-size:10.3px;line-height:12.36px;color:#3e3e3e">百度网盘</span>
<span class="t" style="left:609.6px;top:121.42px;font-size:10.3px;line-height:12.36px;color:#3e3e3e">保存</span>
<span class="t" style="left:518.8px;top:90.42px;font-size:10.3px;line-height:12.36px;color:#3e3e3e">全文</span>
<span class="t" style="left:518.8px;top:103.52px;font-size:10.3px;line-height:12.36px;color:#3e3e3e">翻译</span>
<span class="t" style="left:518.8px;top:121.62px;font-size:10.3px;line-height:12.36px;color:#3e3e3e">翻译</span>
<span class="t" style="left:68.9px;top:63.02px;font-size:10.3px;line-height:12.36px;color:#444">微软雅黑 (中文正文)</span>
<span class="t" style="left:195.4px;top:63.02px;font-size:10.3px;line-height:12.36px;color:#444">小五</span>
<span class="l" style="left:119.34px;top:144.33px;font-size:8.1px;line-height:9.72px;color:#444;transform:translateX(-50%);">2</span>
<span class="l" style="left:141.88px;top:144.33px;font-size:8.1px;line-height:9.72px;color:#444;transform:translateX(-50%);">4</span>
<span class="l" style="left:164.42px;top:144.33px;font-size:8.1px;line-height:9.72px;color:#444;transform:translateX(-50%);">6</span>
<span class="l" style="left:186.96px;top:144.33px;font-size:8.1px;line-height:9.72px;color:#444;transform:translateX(-50%);">8</span>
<span class="l" style="left:209.5px;top:144.33px;font-size:8.1px;line-height:9.72px;color:#444;transform:translateX(-50%);">10</span>
<span class="l" style="left:232.04px;top:144.33px;font-size:8.1px;line-height:9.72px;color:#444;transform:translateX(-50%);">12</span>
<span class="l" style="left:254.58px;top:144.33px;font-size:8.1px;line-height:9.72px;color:#444;transform:translateX(-50%);">14</span>
<span class="l" style="left:277.12px;top:144.33px;font-size:8.1px;line-height:9.72px;color:#444;transform:translateX(-50%);">16</span>
<span class="l" style="left:299.66px;top:144.33px;font-size:8.1px;line-height:9.72px;color:#444;transform:translateX(-50%);">18</span>
<span class="l" style="left:322.2px;top:144.33px;font-size:8.1px;line-height:9.72px;color:#444;transform:translateX(-50%);">20</span>
<span class="l" style="left:344.74px;top:144.33px;font-size:8.1px;line-height:9.72px;color:#444;transform:translateX(-50%);">22</span>
<span class="l" style="left:367.28px;top:144.33px;font-size:8.1px;line-height:9.72px;color:#444;transform:translateX(-50%);">24</span>
<span class="l" style="left:389.82px;top:144.33px;font-size:8.1px;line-height:9.72px;color:#444;transform:translateX(-50%);">26</span>
<span class="l" style="left:412.36px;top:144.33px;font-size:8.1px;line-height:9.72px;color:#444;transform:translateX(-50%);">28</span>
<span class="l" style="left:434.9px;top:144.33px;font-size:8.1px;line-height:9.72px;color:#444;transform:translateX(-50%);">30</span>
<span class="l" style="left:457.44px;top:144.33px;font-size:8.1px;line-height:9.72px;color:#444;transform:translateX(-50%);">32</span>
<span class="l" style="left:479.98px;top:144.33px;font-size:8.1px;line-height:9.72px;color:#444;transform:translateX(-50%);">34</span>
<span class="l" style="left:502.52px;top:144.33px;font-size:8.1px;line-height:9.72px;color:#444;transform:translateX(-50%);">36</span>
<span class="l" style="left:525.06px;top:144.33px;font-size:8.1px;line-height:9.72px;color:#444;transform:translateX(-50%);">38</span>
<span class="l" style="left:547.6px;top:144.33px;font-size:8.1px;line-height:9.72px;color:#444;transform:translateX(-50%);">40</span>
<span class="l" style="left:74.26px;top:144.33px;font-size:8.1px;line-height:9.72px;color:#444;transform:translateX(-50%);">2</span>
<span class="l" style="left:51.72px;top:144.33px;font-size:8.1px;line-height:9.72px;color:#444;transform:translateX(-50%);">4</span>
<span class="l" style="left:29.18px;top:144.33px;font-size:8.1px;line-height:9.72px;color:#444;transform:translateX(-50%);">6</span>
<span class="l" style="left:570.14px;top:144.33px;font-size:8.1px;line-height:9.72px;color:#444;transform:translateX(-50%);">42</span>
<span class="l" style="left:592.68px;top:144.33px;font-size:8.1px;line-height:9.72px;color:#444;transform:translateX(-50%);">44</span>
<span class="l" style="left:615.22px;top:144.33px;font-size:8.1px;line-height:9.72px;color:#444;transform:translateX(-50%);">46</span>
<span class="l" style="left:637.76px;top:144.33px;font-size:8.1px;line-height:9.72px;color:#444;transform:translateX(-50%);">48</span>
<span class="l" style="left:660.3px;top:144.33px;font-size:8.1px;line-height:9.72px;color:#444;transform:translateX(-50%);">50</span>
<span class="l" style="left:13.3px;top:182.31px;font-size:8.1px;line-height:9.72px;color:#444;transform:translateX(-50%);transform:translateX(-50%) rotate(-90deg);">4</span>
<span class="l" style="left:13.3px;top:218.37px;font-size:8.1px;line-height:9.72px;color:#444;transform:translateX(-50%);transform:translateX(-50%) rotate(-90deg);">2</span>
<span class="l" style="left:13.3px;top:289.89px;font-size:8.1px;line-height:9.72px;color:#444;transform:translateX(-50%);transform:translateX(-50%) rotate(-90deg);">2</span>
<span class="l" style="left:13.3px;top:324.75px;font-size:8.1px;line-height:9.72px;color:#444;transform:translateX(-50%);transform:translateX(-50%) rotate(-90deg);">4</span>
<span class="l" style="left:13.3px;top:359.61px;font-size:8.1px;line-height:9.72px;color:#444;transform:translateX(-50%);transform:translateX(-50%) rotate(-90deg);">6</span>
<span class="l" style="left:13.3px;top:394.47px;font-size:8.1px;line-height:9.72px;color:#444;transform:translateX(-50%);transform:translateX(-50%) rotate(-90deg);">8</span>
<span class="l" style="left:13.3px;top:429.33px;font-size:8.1px;line-height:9.72px;color:#444;transform:translateX(-50%);transform:translateX(-50%) rotate(-90deg);">10</span>
<span class="l" style="left:13.3px;top:464.19px;font-size:8.1px;line-height:9.72px;color:#444;transform:translateX(-50%);transform:translateX(-50%) rotate(-90deg);">12</span>
<span class="l" style="left:13.3px;top:499.05px;font-size:8.1px;line-height:9.72px;color:#444;transform:translateX(-50%);transform:translateX(-50%) rotate(-90deg);">14</span>
<span class="t" style="left:97.9px;top:261.3px;font-size:10.08px;line-height:12.1px;color:#505050">软件自学网是一个专业学习</span>
<span class="t" style="left:221.9px;top:261.3px;font-size:9px;line-height:12.1px;color:#505050">AutoCAD</span>
<span class="t" style="left:261.9px;top:261.3px;font-size:10.08px;line-height:12.1px;color:#505050">,</span>
<span class="t" style="left:264.3px;top:261.3px;font-size:8.7px;line-height:12.1px;color:#505050">UG,Pro/E,PS</span>
<span class="t" style="left:315px;top:261.3px;font-size:10.08px;line-height:12.1px;color:#505050">,</span>
<span class="t" style="left:317.7px;top:261.3px;font-size:10.08px;line-height:12.1px;color:#505050;letter-spacing:0.085px">天正建筑等各类办公软件的我要自学网络平台，本站里</span>
<span class="t" style="left:97.9px;top:279.05px;font-size:10.08px;line-height:12.1px;color:#505050">的视频教程均由经验丰富的</span>
<span class="t" style="left:218.2px;top:279.05px;font-size:10.08px;line-height:12.1px;color:#505050">,</span>
<span class="t" style="left:221.5px;top:279.05px;font-size:10.08px;line-height:12.1px;color:#505050;letter-spacing:0.13px">有大型企业工作经验的资深老师录制，绝对是大家立足社会真正要需用到的</span>
<span class="t" style="left:97.9px;top:297.05px;font-size:10.08px;line-height:12.1px;color:#505050">各类软件技术，如</span>
<span class="t" style="left:181.6px;top:297.05px;font-size:9px;line-height:12.1px;color:#505050">AutoCAD2012</span>
<span class="t" style="left:242.4px;top:297.05px;font-size:10.08px;line-height:12.1px;color:#505050">视频教程</span>
<span class="t" style="left:281.9px;top:297.05px;font-size:10.08px;line-height:12.1px;color:#505050">,</span>
<span class="t" style="left:284.2px;top:297.05px;font-size:9.5px;line-height:12.1px;color:#505050">Pro/E5.0</span>
<span class="t" style="left:323.9px;top:297.05px;font-size:10.08px;line-height:12.1px;color:#505050">视频教程</span>
<span class="t" style="left:363.8px;top:297.05px;font-size:10.08px;line-height:12.1px;color:#505050">,</span>
<span class="t" style="left:366.2px;top:297.05px;font-size:9.3px;line-height:12.1px;color:#505050">UG8.0</span>
<span class="t" style="left:395.2px;top:297.05px;font-size:10.08px;line-height:12.1px;color:#505050">视频教程等</span>
<span class="t" style="left:444.6px;top:297.05px;font-size:10.08px;line-height:12.1px;color:#505050">,</span>
<span class="t" style="left:448.1px;top:297.05px;font-size:10.08px;line-height:12.1px;color:#505050;letter-spacing:0.2px">我要自学去哪里？当然是</span>
<span class="t" style="left:97.9px;top:314.75px;font-size:10.08px;line-height:12.1px;color:#505050">软件自学网。如果您觉得好，请分享给您的朋友。</span>
<span class="l" style="left:343.1px;top:335.86px;font-size:10.6px;line-height:12.72px;color:#3f4a63;">(Ctrl)</span>
<span class="t" style="left:6.4px;top:534.02px;font-size:10.3px;line-height:12.36px;color:#3e3e3e">第 1 页，共 1 页</span>
<span class="t" style="left:100.9px;top:534.02px;font-size:10.3px;line-height:12.36px;color:#3e3e3e">142 个字</span>
<span class="t" style="left:185.4px;top:534.02px;font-size:10.3px;line-height:12.36px;color:#3e3e3e">中文(中国)</span>
<span class="t" style="left:272.8px;top:534.02px;font-size:10.3px;line-height:12.36px;color:#6b6b6b">软件自学网：RJZXW.COM</span>
<span class="l" style="left:656.8px;top:535.14px;font-size:10.3px;line-height:12.36px;color:#3e3e3e;">100%</span>
<span class="l" style="left:106.6px;top:7.65px;font-size:7.4px;line-height:8.88px;color:#ffffff;font-weight:bold;">A</span>
<span class="l" style="left:242.1px;top:61.35px;font-size:7.4px;line-height:8.88px;color:#333;transform:translateX(-50%);">wén</span>
<span class="l" style="left:260.1px;top:61.76px;font-size:11.8px;line-height:14.16px;color:#2a2a2a;transform:translateX(-50%);">A</span>
<span class="l" style="left:71.2px;top:81.68px;font-size:10.4px;line-height:12.48px;color:#333;font-weight:bold;transform:scaleX(0.88);transform-origin:left;">B</span>
<span class="l" style="left:91.4px;top:81.8px;font-size:10.2px;line-height:12.24px;color:#333;font-weight:bold;font-style:italic;font-family:'Liberation Serif',serif;">I</span>
<span class="l" style="left:108.9px;top:81.71px;font-size:10px;line-height:12px;color:#333;">U</span>
<span class="l" style="left:134.4px;top:82.07px;font-size:9.4px;line-height:11.28px;color:#333;">abc</span>
<span class="l" style="left:155px;top:82.06px;font-size:10.6px;line-height:12.72px;color:#333;font-weight:bold;">x</span>
<span class="l" style="left:161.6px;top:88.22px;font-size:5.4px;line-height:6.48px;color:#2e75b6;font-weight:bold;">2</span>
<span class="l" style="left:174px;top:82.06px;font-size:10.6px;line-height:12.72px;color:#333;font-weight:bold;">x</span>
<span class="l" style="left:180.6px;top:81.22px;font-size:5.4px;line-height:6.48px;color:#2e75b6;font-weight:bold;">2</span>
<span class="l" style="left:199.6px;top:80.88px;font-size:7px;line-height:8.4px;color:#444;">A</span>
<span class="l" style="left:75.3px;top:99.11px;font-size:13.4px;line-height:16.08px;color:#fff;font-weight:bold;transform:translateX(-50%);-webkit-text-stroke:1.7px #2e75b6;paint-order:stroke fill;">A</span>
<span class="l" style="left:96.4px;top:100.37px;font-size:8.2px;line-height:9.84px;color:#333;">ab</span>
<span class="l" style="left:132.5px;top:99.69px;font-size:11.4px;line-height:13.68px;color:#333;transform:translateX(-50%);">A</span>
<span class="l" style="left:154.2px;top:100.76px;font-size:10.6px;line-height:12.72px;color:#444;">Aa</span>
<span class="l" style="left:192.4px;top:101.77px;font-size:11.6px;line-height:13.92px;color:#444;">A</span>
<span class="l" style="left:211.8px;top:103.75px;font-size:9.6px;line-height:11.52px;color:#444;">A</span>
<span class="l" style="left:241.7px;top:101.03px;font-size:11px;line-height:13.2px;color:#333;transform:translateX(-50%);">A</span>
<span class="l" style="left:309px;top:60.89px;font-size:4.6px;line-height:5.52px;color:#2e75b6;font-weight:bold;">1</span>
<span class="l" style="left:309px;top:65.69px;font-size:4.6px;line-height:5.52px;color:#2e75b6;font-weight:bold;">2</span>
<span class="l" style="left:309px;top:70.49px;font-size:4.6px;line-height:5.52px;color:#2e75b6;font-weight:bold;">3</span>
<span class="l" style="left:337px;top:60.69px;font-size:4.6px;line-height:5.52px;color:#2e75b6;font-weight:bold;">1</span>
<span class="l" style="left:340px;top:65.49px;font-size:4.6px;line-height:5.52px;color:#2e75b6;font-weight:bold;">a</span>
<span class="l" style="left:343.4px;top:70.29px;font-size:4.6px;line-height:5.52px;color:#2e75b6;font-weight:bold;">i</span>
<span class="l" style="left:352.2px;top:103.05px;font-size:9.6px;line-height:11.52px;color:#444;transform:translateX(-50%);transform:translateX(-50%) scaleX(1.65);">A</span>
<span class="l" style="left:381.8px;top:99.11px;font-size:7.8px;line-height:9.36px;color:#2e75b6;font-weight:bold;">A</span>
<span class="l" style="left:382px;top:106.09px;font-size:8px;line-height:9.6px;color:#8e44ad;font-weight:bold;">Z</span>
<span class="l" style="left:523px;top:68.41px;font-size:13.4px;line-height:16.08px;color:#4a4a4a;transform:translateX(-50%);">a</span>
</div>
</body></html>
